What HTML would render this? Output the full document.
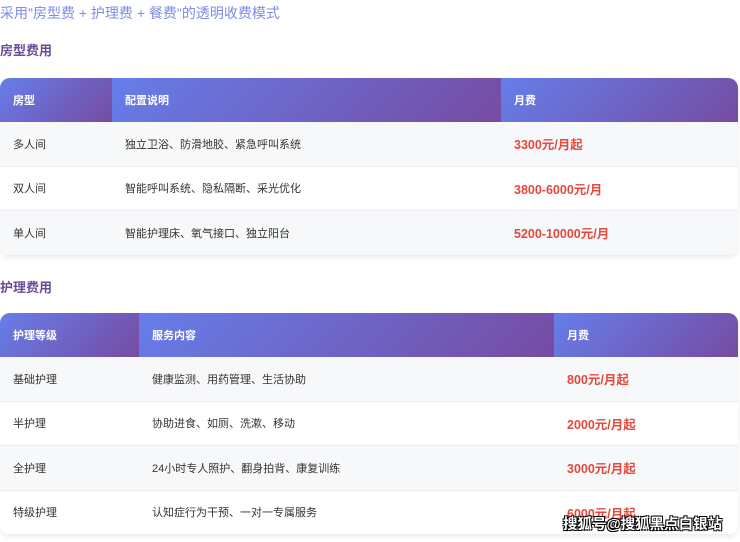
<!DOCTYPE html>
<html><head><meta charset="utf-8"><style>
*{margin:0;padding:0;box-sizing:border-box}
body{width:740px;height:542px;overflow:hidden;background:#fff;font-family:"Liberation Sans","Noto Sans CJK SC",sans-serif;position:relative}
.t{position:absolute;left:0;top:3px;font-size:14px;color:#7f8ce6}
.h{position:absolute;left:0;font-size:13px;font-weight:bold;color:#6a4b98}
table{position:absolute;left:0;width:738px;border-collapse:separate;border-spacing:0;border-radius:10px;overflow:hidden;box-shadow:0 2px 6px rgba(0,0,0,.08)}
th{height:44px;text-align:left;padding-left:13px;color:#fff;font-size:11px;font-weight:bold;background:linear-gradient(135deg,#667eea,#764ba2)}
td{height:44.5px;padding-left:13px;font-size:11px;color:#333;border-bottom:1px solid #ececf0}
tr:nth-child(odd) td{background:#f7f8fa}
td.p{color:#e5483c;font-weight:bold;font-size:12.5px}
.w{position:absolute;left:563px;top:513px;font-size:14.5px;font-weight:bold;color:#fff;white-space:nowrap;text-shadow:-1px -1px 0 #000,1px -1px 0 #000,-1px 1px 0 #000,1px 1px 0 #000}
</style></head><body>
<div class="t">采用"房型费 + 护理费 + 餐费"的透明收费模式</div>
<div class="h" style="top:40px">房型费用</div>
<table style="top:78px"><thead><tr><th style="width:112px">房型</th><th style="width:389px">配置说明</th><th>月费</th></tr></thead>
<tbody>
<tr><td>多人间</td><td>独立卫浴、防滑地胶、紧急呼叫系统</td><td class="p">3300元/月起</td></tr>
<tr><td>双人间</td><td>智能呼叫系统、隐私隔断、采光优化</td><td class="p">3800-6000元/月</td></tr>
<tr><td>单人间</td><td>智能护理床、氧气接口、独立阳台</td><td class="p">5200-10000元/月</td></tr>
</tbody></table>
<div class="h" style="top:277px">护理费用</div>
<table style="top:313px"><thead><tr><th style="width:139px">护理等级</th><th style="width:415px">服务内容</th><th>月费</th></tr></thead>
<tbody>
<tr><td>基础护理</td><td>健康监测、用药管理、生活协助</td><td class="p">800元/月起</td></tr>
<tr><td>半护理</td><td>协助进食、如厕、洗漱、移动</td><td class="p">2000元/月起</td></tr>
<tr><td>全护理</td><td>24小时专人照护、翻身拍背、康复训练</td><td class="p">3000元/月起</td></tr>
<tr><td>特级护理</td><td>认知症行为干预、一对一专属服务</td><td class="p">6000元/月起</td></tr>
</tbody></table>
<div class="w">搜狐号@搜狐黑点白银站</div>
</body></html>
